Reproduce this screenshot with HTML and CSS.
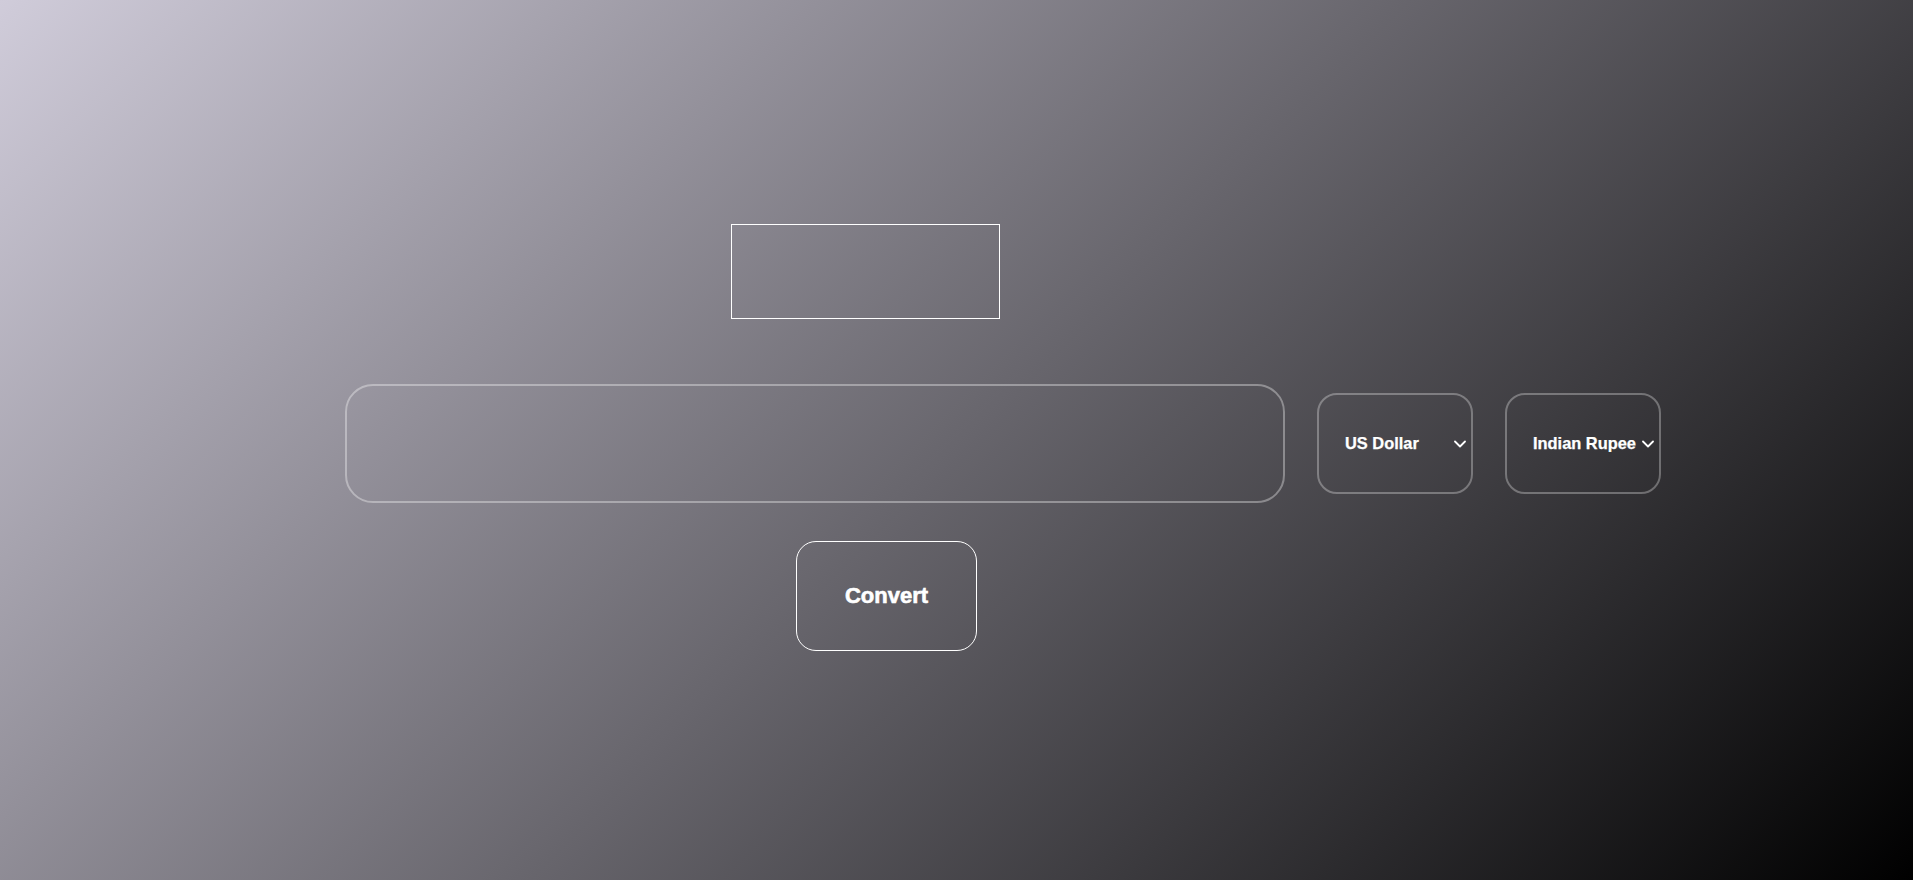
FILE: index.html
```html
<!DOCTYPE html>
<html lang="en">
<head>
<meta charset="utf-8">
<title>Currency Converter</title>
<link rel="stylesheet" href="styles.css">
</head>
<body>
<main class="app">
  <div class="result"></div>
  <div class="row">
    <input class="amount" type="number" aria-label="Amount">
    <div class="select-wrap">
      <select class="currency" aria-label="From currency">
        <option>US Dollar</option>
        <option>Indian Rupee</option>
        <option>Euro</option>
      </select>
      <svg class="chevron" width="12" height="8" viewBox="0 0 12 8"><path d="M1 1.5 L6 6.5 L11 1.5" fill="none" stroke="#fff" stroke-width="1.8" stroke-linecap="round" stroke-linejoin="round"/></svg>
    </div>
    <div class="select-wrap">
      <select class="currency" aria-label="To currency">
        <option>Indian Rupee</option>
        <option>US Dollar</option>
        <option>Euro</option>
      </select>
      <svg class="chevron" width="12" height="8" viewBox="0 0 12 8"><path d="M1 1.5 L6 6.5 L11 1.5" fill="none" stroke="#fff" stroke-width="1.8" stroke-linecap="round" stroke-linejoin="round"/></svg>
    </div>
  </div>
  <button class="convert" type="button">Convert</button>
</main>
</body>
</html>
```

FILE: styles.css
```css
html, body {
  margin: 0;
  height: 100%;
}

body {
  background: linear-gradient(135deg, #d0ccda 0%, #000000 100%);
  font-family: "Liberation Sans", Arial, sans-serif;
  color: #fff;
  overflow: hidden;
}

.app {
  box-sizing: border-box;
  min-height: 100vh;
  padding: 224px 0 0 345px;
  display: flex;
  flex-direction: column;
  align-items: flex-start;
}

.result {
  box-sizing: border-box;
  width: 269px;
  height: 95px;
  margin-left: 386px;
  border: 1px solid #fff;
}

.row {
  display: flex;
  align-items: center;
  gap: 32px;
  margin-top: 65px;
}

.amount {
  box-sizing: border-box;
  width: 940px;
  height: 119px;
  padding: 0 28px;
  background: transparent;
  border: 2px solid rgba(255, 255, 255, 0.35);
  border-radius: 28px;
  color: #fff;
  font-family: inherit;
  font-size: 20px;
  outline: none;
}

.select-wrap {
  position: relative;
  display: flex;
}

.currency {
  box-sizing: border-box;
  width: 156px;
  height: 101px;
  padding: 0 18px 2px 26px;
  -webkit-appearance: none;
  appearance: none;
  background: transparent;
  border: 2px solid rgba(255, 255, 255, 0.3);
  border-radius: 20px;
  color: #fff;
  font-family: inherit;
  font-size: 16.4px;
  font-weight: bold;
  -webkit-text-stroke: 0.25px #fff;
  outline: none;
}

.currency option {
  background: #3a383e;
  color: #fff;
}

.chevron {
  position: absolute;
  right: 7px;
  top: 47px;
  pointer-events: none;
}

.convert {
  box-sizing: border-box;
  width: 181px;
  height: 110px;
  margin-top: 38px;
  margin-left: 451px;
  background: transparent;
  border: 1px solid #fff;
  border-radius: 20px;
  color: #fff;
  font-family: inherit;
  font-size: 22px;
  font-weight: bold;
  -webkit-text-stroke: 0.6px #fff;
  cursor: pointer;
}
```
